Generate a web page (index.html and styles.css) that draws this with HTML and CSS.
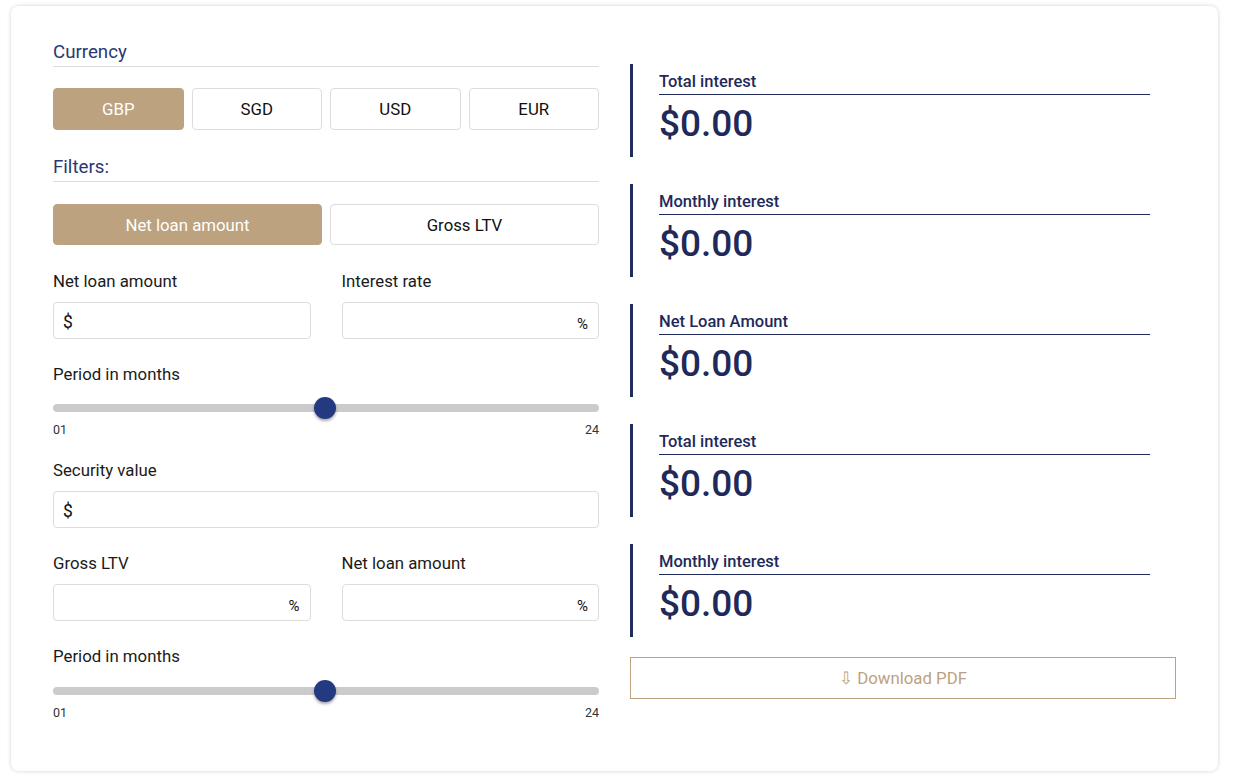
FILE: index.html
```html
<!DOCTYPE html>
<html lang="en">
<head>
<meta charset="utf-8">
<title>Loan calculator</title>
<link rel="stylesheet" href="styles.css">
</head>
<body>
<div class="card">
  <div class="left">
    <div class="section-title">Currency</div>
    <div class="btn-row four">
      <button class="opt active">GBP</button>
      <button class="opt">SGD</button>
      <button class="opt">USD</button>
      <button class="opt">EUR</button>
    </div>
    <div class="section-title filters">Filters:</div>
    <div class="btn-row two">
      <button class="opt active">Net loan amount</button>
      <button class="opt">Gross LTV</button>
    </div>

    <div class="grid2 first">
      <div class="field">
        <label class="lbl">Net loan amount</label>
        <div class="input"><span class="prefix">$</span></div>
      </div>
      <div class="field">
        <label class="lbl">Interest rate</label>
        <div class="input right"><span class="suffix">%</span></div>
      </div>
    </div>

    <div class="slider-field">
      <label class="lbl">Period in months</label>
      <div class="slider">
        <div class="track"></div>
        <div class="thumb" style="left: 49.8%"></div>
      </div>
      <div class="ticks"><span>01</span><span>24</span></div>
    </div>

    <div class="field single">
      <label class="lbl">Security value</label>
      <div class="input"><span class="prefix">$</span></div>
    </div>

    <div class="grid2">
      <div class="field">
        <label class="lbl">Gross LTV</label>
        <div class="input right"><span class="suffix">%</span></div>
      </div>
      <div class="field">
        <label class="lbl">Net loan amount</label>
        <div class="input right"><span class="suffix">%</span></div>
      </div>
    </div>

    <div class="slider-field last">
      <label class="lbl">Period in months</label>
      <div class="slider">
        <div class="track"></div>
        <div class="thumb" style="left: 49.8%"></div>
      </div>
      <div class="ticks"><span>01</span><span>24</span></div>
    </div>
  </div>

  <div class="right-col">
    <div class="result">
      <div class="r-label">Total interest</div>
      <div class="r-value">$0.00</div>
    </div>
    <div class="result">
      <div class="r-label">Monthly interest</div>
      <div class="r-value">$0.00</div>
    </div>
    <div class="result">
      <div class="r-label">Net Loan Amount</div>
      <div class="r-value">$0.00</div>
    </div>
    <div class="result">
      <div class="r-label">Total interest</div>
      <div class="r-value">$0.00</div>
    </div>
    <div class="result">
      <div class="r-label">Monthly interest</div>
      <div class="r-value">$0.00</div>
    </div>
    <button class="download">&#8681; Download PDF</button>
  </div>
</div>
</body>
</html>
```

FILE: styles.css
```css
* { box-sizing: border-box; }

html, body {
  margin: 0;
  padding: 0;
  background: #ffffff;
}

body {
  font-family: Roboto, "Liberation Sans", Arial, sans-serif;
  color: #222;
  padding: 6px 18px 12px 11px;
}

.card {
  height: 765px;
  background: #fff;
  border-radius: 8px;
  box-shadow: 0 0 4px rgba(0, 0, 0, 0.18);
  padding: 34px 42px 0 42px;
  display: flex;
  gap: 31px;
}

.left {
  width: 546px;
  flex: none;
}

.section-title {
  font-size: 18.7px;
  line-height: 24px;
  color: #2a3874;
  padding-bottom: 2px;
  border-bottom: 1px solid #dcdcdc;
}

.section-title.filters {
  margin-top: 25px;
}

.btn-row {
  display: grid;
  gap: 8px;
  margin-top: 21px;
}

.btn-row.four { grid-template-columns: repeat(4, 1fr); }
.btn-row.two { grid-template-columns: repeat(2, 1fr); margin-top: 22px; }
.btn-row.two .opt { height: 41px; }

.opt {
  height: 42px;
  border: 1px solid #dcdcdc;
  border-radius: 4px;
  background: #fff;
  font-family: inherit;
  font-size: 16.8px;
  color: #111;
  padding: 0;
}

.opt.active {
  background: #bca27e;
  border-color: #bca27e;
  color: #fff;
}

.grid2 {
  display: grid;
  grid-template-columns: 1fr 1fr;
  gap: 31px;
  margin-top: 25px;
}

.grid2.first { margin-top: 26px; }

.lbl {
  display: block;
  font-size: 16.8px;
  line-height: 20px;
  color: #1a1a1a;
}

.input {
  margin-top: 11px;
  height: 37px;
  border: 1px solid #dcdcdc;
  border-radius: 4px;
  display: flex;
  align-items: center;
  padding: 0 10px 0 9px;
}

.input.right {
  justify-content: flex-end;
  align-items: flex-end;
  padding-bottom: 5px;
}

.prefix {
  font-size: 17.5px;
  color: #111;
  padding-top: 2px;
}

.suffix {
  font-size: 15px;
  color: #111;
}

.field.single { margin-top: 23px; }

.slider-field { margin-top: 25px; }

.slider {
  position: relative;
  height: 22px;
  margin-top: 13px;
  display: flex;
  align-items: center;
}

.slider-field.last .slider { margin-top: 14px; }

.track {
  width: 100%;
  height: 8px;
  border-radius: 4px;
  background: #cbcbcb;
}

.thumb {
  position: absolute;
  top: 0;
  width: 22px;
  height: 22px;
  margin-left: -11px;
  border-radius: 50%;
  background: #243a80;
  box-shadow: 0 2px 3px rgba(0, 0, 0, 0.35);
}

.ticks {
  display: flex;
  justify-content: space-between;
  font-size: 12.5px;
  line-height: 14px;
  color: #333;
  margin-top: 4px;
}

.right-col {
  width: 546px;
  flex: none;
  margin-top: 24px;
  display: flex;
  flex-direction: column;
  gap: 27px;
}

.result {
  height: 93px;
  border-left: 3px solid #1f2c5e;
  padding: 7px 26px 0 26px;
}

.r-label {
  font-size: 16.5px;
  font-weight: 500;
  line-height: 20px;
  color: #1f2a5a;
  padding: 1px 0 2px 0;
  border-bottom: 1px solid #1f2a5a;
}

.r-value {
  margin-top: 7px;
  font-size: 37px;
  line-height: 44px;
  font-weight: 500;
  color: #1f2a5a;
}

.download {
  margin-top: -7px;
  height: 42px;
  background: #fff;
  border: 1px solid #bca27e;
  border-radius: 0;
  color: #bca27e;
  font-family: inherit;
  font-size: 16.8px;
}
```
